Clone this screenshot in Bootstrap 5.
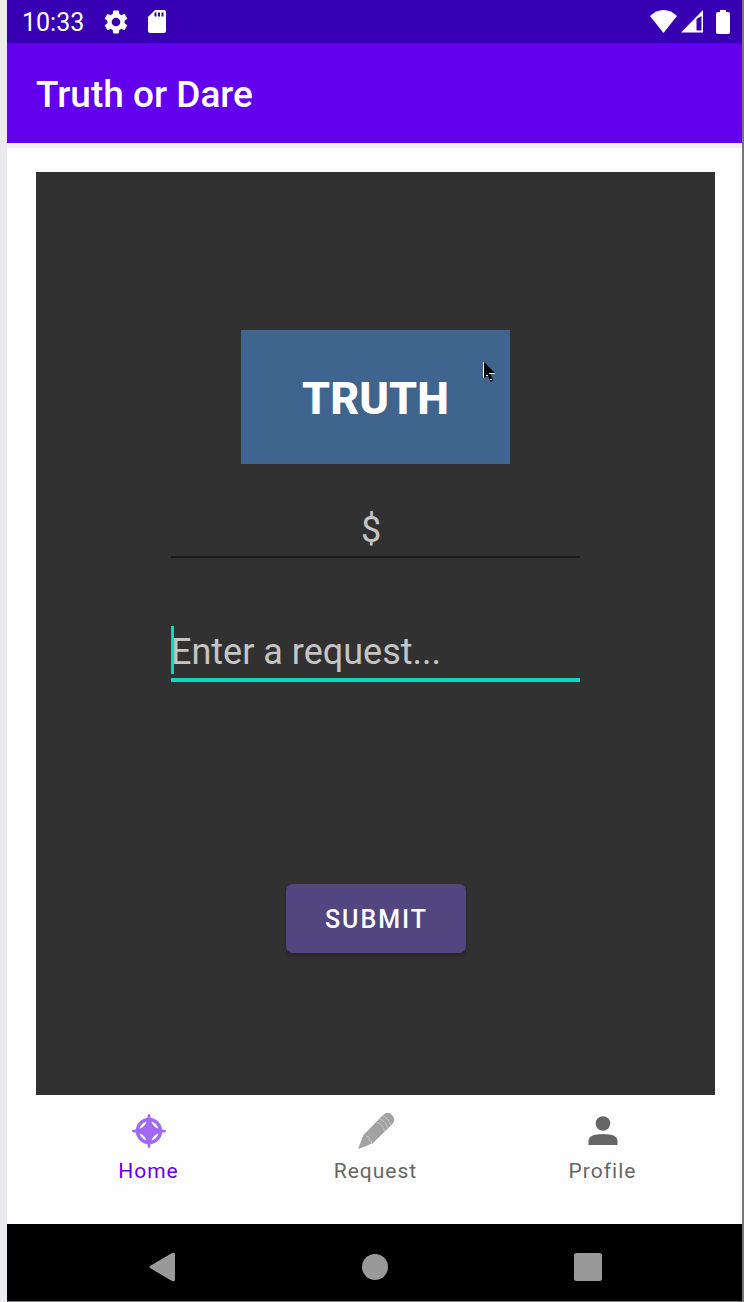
<!DOCTYPE html>
<html lang="en">
<head>
<meta charset="utf-8">
<meta name="viewport" content="width=device-width, initial-scale=1">
<title>Truth or Dare</title>
<link href="https://cdn.jsdelivr.net/npm/bootstrap@5.3.0/dist/css/bootstrap.min.css" rel="stylesheet">
<style>
  body { font-family: Roboto, "Liberation Sans", sans-serif; background: #ebebed; }
  svg { display: block; }
  .screen { margin-left: 7px; border-right: 2px solid #777; border-bottom: 1px solid #777; background: #fefefe; }
  .status-bar { height: 43px; padding: 0 12px 0 15px; background: #3700b3; font-size: 25px; line-height: 43px; }
  .status-bar .status-left { gap: 20px; }
  .status-bar .clock { padding-top: 2px; }
  .battery { margin-left: 13px; }
  .app-bar { height: 100px; padding: 3px 29px 0; background: #6200ee; box-shadow: 0 5px 0 #f2f2f2; }
  .app-bar h1 { font-size: 37px; line-height: 44px; font-weight: 500; }
  .game-panel { margin: 29px 27px 0 29px; padding: 158px 16px 142px; background: #313131; }
  .truth-btn { width: 269px; height: 134px; background: #3f648d; font-size: 45px; font-weight: 800; padding: 4px 0 0; }
  .truth-btn:hover { background: #4770a0; }
  .pointer { right: 15px; top: 32px; }
  .request-form { width: 100%; max-width: 409px; padding-top: 36px; }
  .line-input { height: 58px; padding: 4px 0 0; border: 0; border-bottom: 2px solid #1b1b1b; border-radius: 0; background: transparent; color: #fff; font-size: 36px; line-height: 48px; }
  .line-input:focus { background: transparent; color: #fff; box-shadow: none; border-color: #03dac5; }
  .line-input::placeholder { color: #c5c5c5; opacity: 1; }
  .request-line { margin-top: 64px; }
  .request-line .line-input { height: 60px; border-bottom: 4px solid #03dac5; caret-color: #03dac5; }
  .caret-bar { left: 0; top: 4px; width: 3px; height: 48px; background: #03dac5; }
  .submit-btn { width: 180px; height: 69px; border-radius: 7px; background: #51467f; font-size: 25px; font-weight: 500; letter-spacing: 2px; padding: 2px 0 0 2px; box-shadow: 0 3px 3px rgba(0,0,0,.2); }
  .submit-btn:hover { background: #5f5392; }
  .tab-bar { height: 129px; padding: 14px 26px 0 28px; }
  .tab-bar a { gap: 6px; color: #666; font-size: 21px; line-height: 32px; letter-spacing: 1px; text-decoration: none; }
  .tab-bar a.active { color: #6200ee; }
  .system-bar { height: 77px; padding: 8px 47px 0 48px; background: #000; }
</style>
</head>
<body>
<div class="screen d-flex flex-column min-vh-100">
  <div class="status-bar d-flex justify-content-between align-items-center text-white">
    <div class="status-left d-flex align-items-center">
      <span class="clock">10:33</span>
      <svg width="24" height="24" viewBox="2 2 20 20" fill="#fff" aria-hidden="true"><path d="M19.140 12.940c.04-.3.06-.61.06-.94 0-.32-.02-.64-.07-.94l2.030-1.580a.49.49 0 0 0 .12-.61l-1.920-3.320a.488.488 0 0 0-.59-.22l-2.390.96c-.5-.38-1.030-.7-1.620-.94l-.36-2.540a.484.484 0 0 0-.48-.41h-3.840c-.24 0-.43.17-.47.41l-.36 2.540c-.59.24-1.130.57-1.620.94l-2.390-.96c-.22-.08-.47 0-.59.22L2.740 8.870c-.12.21-.08.47.12.61l2.030 1.580c-.05.3-.09.63-.09.94s.02.64.07.94l-2.030 1.580a.49.49 0 0 0-.12.61l1.920 3.320c.12.22.37.29.59.22l2.390-.96c.5.38 1.030.7 1.620.94l.36 2.540c.05.24.24.41.48.41h3.840c.24 0 .44-.17.47-.41l.36-2.540c.59-.24 1.130-.56 1.620-.94l2.390.96c.22.08.47 0 .59-.22l1.920-3.320c.12-.22.07-.47-.12-.61l-2.010-1.580zM12 15.600A3.600 3.600 0 1 1 12 8.400a3.600 3.600 0 0 1 0 7.200z"/></svg>
      <svg width="18" height="23" viewBox="0 0 18 23" aria-hidden="true"><path fill="#fff" d="M7 0h9q2 0 2 2v19q0 2-2 2H2q-2 0-2-2V7z"/><path fill="#3700b3" d="M6.500 2.500h2v4h-2zM10 2.500h2v4h-2zM13.500 2.500h2v4h-2z"/></svg>
    </div>
    <div class="d-flex align-items-center">
      <svg width="27" height="23" viewBox="0 0 27 23" aria-hidden="true"><path fill="#fff" d="M0 6Q6 0 13.500 0T27 6L13.500 23z"/></svg>
      <svg class="ms-1" width="22" height="23" viewBox="0 0 22 23" aria-hidden="true"><path fill="#fff" fill-rule="evenodd" d="M0 22.500 22 0v22.500zM15.500 9v11.500h5V6z"/></svg>
      <svg class="battery" width="14" height="24" viewBox="0 0 14 24" aria-hidden="true"><path fill="#fff" d="M4 0h6v2h2q2 0 2 2v18q0 2-2 2H2q-2 0-2-2V4q0-2 2-2h2z"/></svg>
    </div>
  </div>

  <header class="app-bar d-flex align-items-center text-white">
    <h1 class="m-0">Truth or Dare</h1>
  </header>

  <main class="game-panel flex-grow-1 d-flex flex-column align-items-center">
    <div class="position-relative">
      <button type="button" class="truth-btn btn rounded-0 border-0 text-white">TRUTH</button>
      <svg class="pointer position-absolute" width="12" height="21" viewBox="0 0 12 21" aria-hidden="true"><path fill="#000" d="M1 0 12 11H7l3 7-2 2-3-6-4 2z"/><path stroke="#fff" fill="none" d="M.500 0v16M6 11.500h6M3 13.500h2M7 17.500h2"/></svg>
    </div>
    <form id="request-form" class="request-form">
      <input type="text" class="line-input form-control text-center" placeholder="$&nbsp;" aria-label="Amount in dollars">
      <div class="request-line position-relative">
        <input type="text" class="line-input form-control" placeholder="Enter a request..." aria-label="Request">
        <span class="caret-bar position-absolute"></span>
      </div>
    </form>
    <button type="submit" form="request-form" class="submit-btn btn border-0 text-white mt-auto">SUBMIT</button>
  </main>

  <nav class="tab-bar d-flex text-center" aria-label="Main">
    <a href="#home" class="active d-flex flex-column align-items-center flex-fill w-100" aria-current="page">
      <svg width="40" height="40" viewBox="0 0 40 40" aria-hidden="true"><circle cx="20" cy="22" r="11.500" fill="none" stroke="#a16af5" stroke-width="3.500"/><path fill="#a16af5" d="M20 5q1.500 0 1.500 3.500 1 6 3.500 8.500t8.500 3.500q3.500 0 3.500 1.500t-3.500 1.500q-6 1-8.500 3.500t-3.500 8.500q0 3.500-1.500 3.500t-1.500-3.500q-1-6-3.500-8.500T6.500 23.500Q3 23.500 3 22t3.500-1.500q6-1 8.500-3.500t3.500-8.500Q18.500 5 20 5z"/><circle cx="20" cy="22" r="7" fill="#a16af5"/></svg>
      <span>Home</span>
    </a>
    <a href="#request" class="d-flex flex-column align-items-center flex-fill w-100">
      <svg width="40" height="40" viewBox="0 0 40 40" aria-hidden="true"><path fill="#a2a2a2" d="M2 40 7.500 26 26.500 6.500q5-5 9.500-.5t0 9.500L17 34q-6 3-15 6z"/><path fill="none" stroke="#cacaca" stroke-width="1" d="M20.500 13q6.500 2 8 9M23.500 10q6.500 2 8 9M26.500 7q6.500 2 8 9M10 27l3 1v3l2 1 1 3"/></svg>
      <span>Request</span>
    </a>
    <a href="#profile" class="d-flex flex-column align-items-center flex-fill w-100">
      <svg width="40" height="40" viewBox="0 0 40 40" aria-hidden="true"><circle cx="20" cy="14.500" r="7.300" fill="#666"/><path fill="#666" d="M5.500 36v-4q0-7 14.500-7t14.500 7v4z"/></svg>
      <span>Profile</span>
    </a>
  </nav>

  <div class="system-bar d-flex align-items-center">
    <button type="button" class="btn border-0 p-0 w-100 d-flex justify-content-center" aria-label="Back"><svg width="26" height="30" viewBox="0 0 26 30"><path fill="#999" d="M1 14 23 1q3-1 3 1v26q0 2-3 1L1 16q-1-1 0-2z"/></svg></button>
    <button type="button" class="btn border-0 p-0 w-100 d-flex justify-content-center" aria-label="Home"><svg width="28" height="28" viewBox="0 0 28 28"><circle cx="14" cy="14" r="13" fill="#999"/></svg></button>
    <button type="button" class="btn border-0 p-0 w-100 d-flex justify-content-center" aria-label="Recent apps"><svg width="28" height="28" viewBox="0 0 28 28"><rect width="28" height="28" rx="2.500" fill="#999"/></svg></button>
  </div>
</div>
<script src="https://cdn.jsdelivr.net/npm/bootstrap@5.3.0/dist/js/bootstrap.bundle.min.js"></script>
</body>
</html>
